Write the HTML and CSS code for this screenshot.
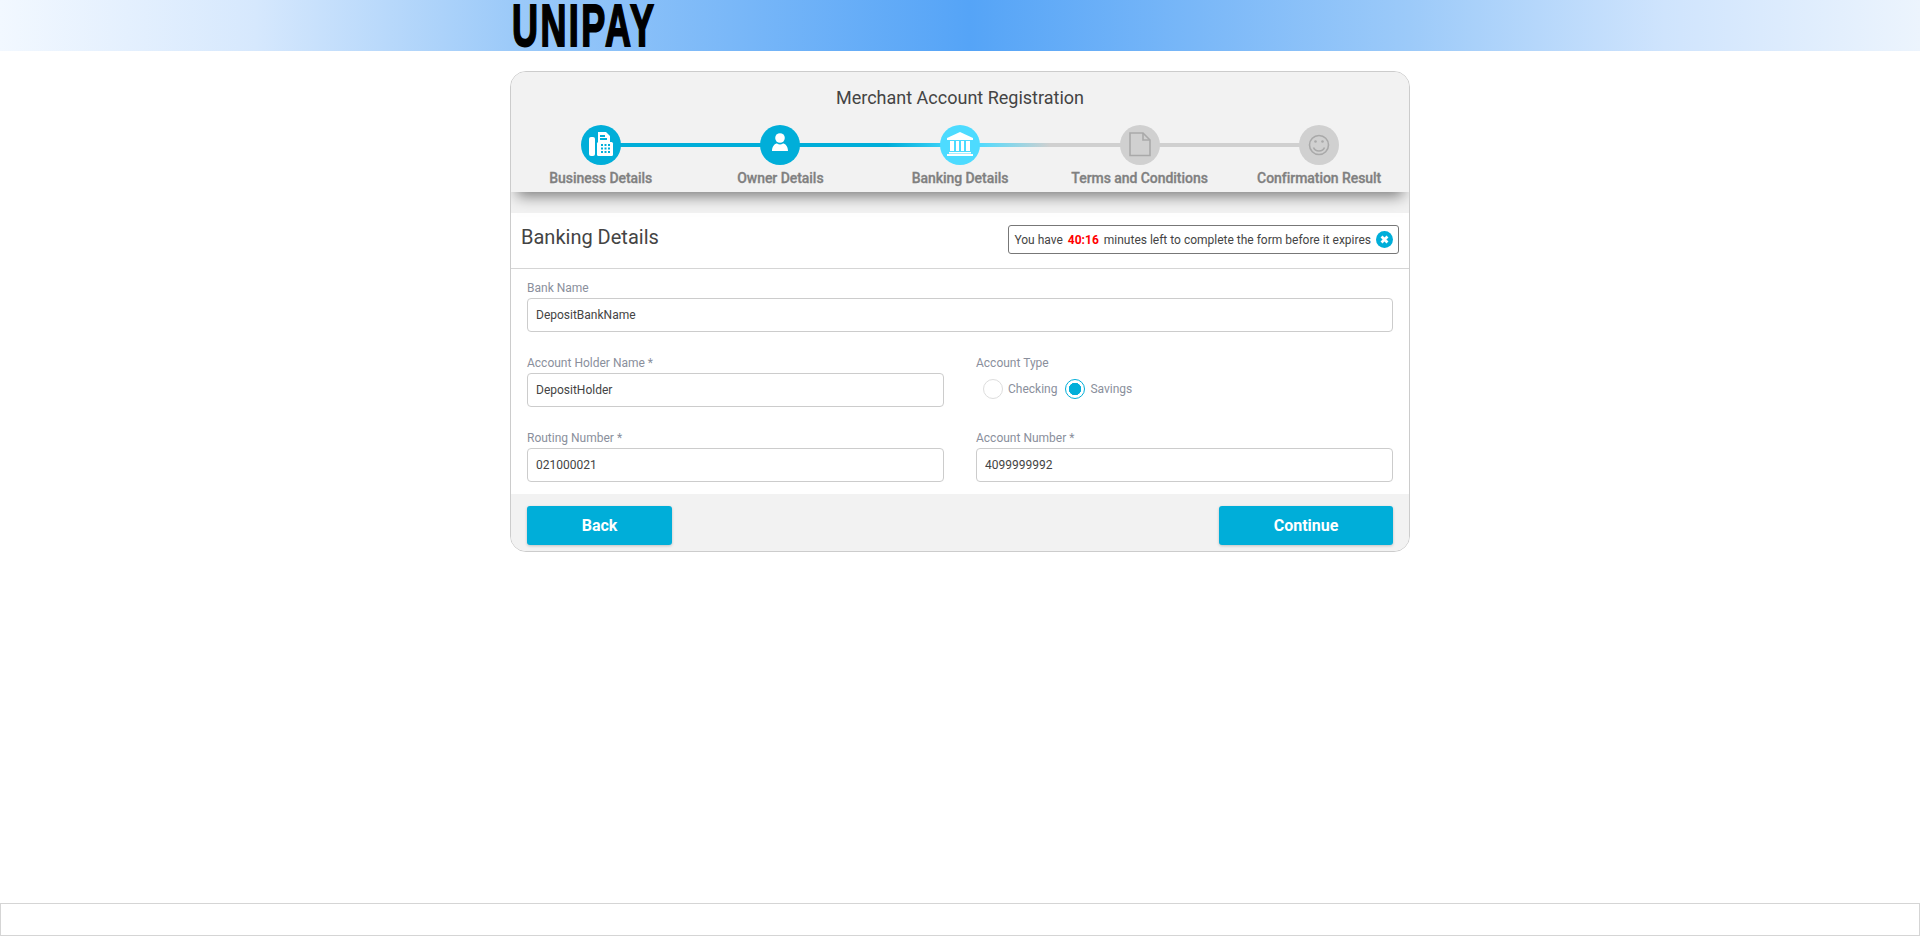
FILE: index.html
```html
<!DOCTYPE html>
<html lang="en">
<head>
  <meta charset="UTF-8">
  <title>Merchant Account Registration</title>
  <link rel="stylesheet" href="styles.css">
</head>
<body>
  <header class="topbar">
    <div class="topbar-inner"><span class="logo">UNIPAY</span></div>
  </header>

  <main class="card">
    <div class="card-head">
      <h1>Merchant Account Registration</h1>
      <ol class="steps">
        <li class="step done">
          <span class="step-icon">
            <svg viewBox="0 0 40 40" width="40" height="40">
              <rect x="8" y="12" width="6" height="19" rx="2" fill="#fff"/>
              <path d="M17 7h8l4 4v8H17z" fill="#fff"/>
              <path d="M19 10h5v2h-5zM19 13h7v2h-7z" fill="#00aed9"/>
              <rect x="16" y="17" width="16" height="14" rx="1.5" fill="#fff"/>
              <path d="M20 19h2v2h-2zM23.500 19h2v2h-2zM27 19h2v2h-2zM20 22.500h2v2h-2zM23.500 22.500h2v2h-2zM27 22.500h2v2h-2zM20 26h2v2h-2zM23.500 26h2v2h-2zM27 26h2v2h-2z" fill="#00aed9"/>
            </svg>
          </span>
          <span class="step-label">Business Details</span>
        </li>
        <li class="step done before-current">
          <span class="step-icon">
            <svg viewBox="0 0 40 40" width="40" height="40">
              <circle cx="20" cy="13" r="4.800" fill="#fff"/>
              <path d="M12 26c0-5 3-7.500 5-7.500 1 .7 2 1 3 1s2-.3 3-1c2 0 5 2.500 5 7.500z" fill="#fff"/>
            </svg>
          </span>
          <span class="step-label">Owner Details</span>
        </li>
        <li class="step current">
          <span class="step-icon">
            <svg viewBox="0 0 40 40" width="40" height="40">
              <path d="M20 7l13 6v2H7v-2z" fill="#fff"/>
              <path d="M10 16h4v10h-4zM16 16h3v10h-3zM21 16h3v10h-3zM26 16h4v10h-4zM9 27h22v1.500H9zM7 29h26v2H7z" fill="#fff"/>
            </svg>
          </span>
          <span class="step-label">Banking Details</span>
        </li>
        <li class="step">
          <span class="step-icon">
            <svg viewBox="0 0 40 40" width="40" height="40" fill="none" stroke="#a9a9a9" stroke-width="1.600">
              <path d="M10 8h13l7 7v15.500H10z"/>
              <path d="M23 8v7h7"/>
            </svg>
          </span>
          <span class="step-label">Terms and Conditions</span>
        </li>
        <li class="step">
          <span class="step-icon">
            <svg viewBox="0 0 40 40" width="40" height="40" fill="none" stroke="#a9a9a9" stroke-width="1.600">
              <circle cx="20" cy="20" r="9.500"/>
              <path d="M14.500 22.500c1 2.500 3 3.500 5.500 3.500s4.500-1 5.500-3.500"/>
              <circle cx="16.500" cy="16.500" r="1.300" fill="#a9a9a9" stroke="none"/>
              <circle cx="23.500" cy="16.500" r="1.300" fill="#a9a9a9" stroke="none"/>
            </svg>
          </span>
          <span class="step-label">Confirmation Result</span>
        </li>
      </ol>
    </div>
    <div class="band"></div>

    <div class="section-head">
      <h2>Banking Details</h2>
      <div class="timer">
        <span>You have</span>
        <span class="time-left">40:16</span>
        <span>minutes left to complete the form before it expires</span>
        <svg class="timer-close" viewBox="0 0 16 16" width="17" height="17">
          <circle cx="8" cy="8" r="8" fill="#00aed9"/>
          <path d="M5.200 5.200l5.600 5.600M10.800 5.200l-5.600 5.600" stroke="#fff" stroke-width="2.600"/>
        </svg>
      </div>
    </div>

    <form class="form">
      <div class="field field-wide">
        <label for="bankName">Bank Name</label>
        <input id="bankName" type="text" value="DepositBankName">
      </div>
      <div class="field">
        <label for="holder">Account Holder Name *</label>
        <input id="holder" type="text" value="DepositHolder">
      </div>
      <div class="field">
        <label>Account Type</label>
        <div class="radios">
          <label class="radio"><input type="radio" name="accountType">Checking</label>
          <label class="radio"><input type="radio" name="accountType" checked>Savings</label>
        </div>
      </div>
      <div class="field">
        <label for="routing">Routing Number *</label>
        <input id="routing" type="text" value="021000021">
      </div>
      <div class="field">
        <label for="account">Account Number *</label>
        <input id="account" type="text" value="4099999992">
      </div>
    </form>

    <div class="card-foot">
      <button class="btn btn-back" type="button">Back</button>
      <button class="btn btn-next" type="button">Continue</button>
    </div>
  </main>

  <footer class="bottombar"></footer>
</body>
</html>
```

FILE: styles.css
```css
* {
  box-sizing: border-box;
}

html, body {
  height: 100%;
}

body {
  margin: 0;
  display: flex;
  flex-direction: column;
  background: #fff;
  font-family: Roboto, "Liberation Sans", sans-serif;
  font-size: 12px;
  color: #444;
}

/* top header */
.topbar {
  height: 51px;
  flex: none;
  background: linear-gradient(90deg, #f2f8ff 0%, #d6e8fd 13.300%, #9ccaf9 26.600%, #55a4f7 50.500%, #9ccaf9 73.400%, #cfe4fd 86.700%, #ecf4fd 100%);
}

.topbar-inner {
  width: 900px;
  height: 51px;
  margin: 0 auto;
  padding-left: 2px;
}

.logo {
  display: block;
  width: 260px;
  font-family: "Liberation Sans", sans-serif;
  font-weight: 700;
  font-size: 60px;
  line-height: 51px;
  color: #000;
  -webkit-text-stroke: 2px #000;
  letter-spacing: 4px;
  white-space: nowrap;
  transform: scaleX(0.6);
  transform-origin: left center;
}

/* main card */
.card {
  width: 900px;
  height: 481px;
  flex: none;
  margin: 20px auto 0;
  border: 1px solid #ccc;
  border-radius: 16px;
  overflow: hidden;
  background: #fff;
}

.card-head {
  position: relative;
  height: 120px;
  padding-top: 15px;
  background: #f2f2f2;
  box-shadow: 0 10px 14px -6px rgba(0, 0, 0, 0.5);
}

h1 {
  margin: 0;
  font-size: 18px;
  font-weight: 400;
  line-height: 22px;
  text-align: center;
  color: #444;
}

.steps {
  display: flex;
  margin: 16px 0 0;
  padding: 0;
  list-style: none;
}

.step {
  position: relative;
  flex: 1;
  display: flex;
  flex-direction: column;
  align-items: center;
}

.step:not(:last-child)::after {
  content: "";
  position: absolute;
  top: 18px;
  left: 50%;
  width: 100%;
  height: 4px;
  background: #d0d0d0;
}

.step.done::after {
  background: #00aed9;
}

.step.before-current::after {
  background: linear-gradient(90deg, #00aed9 60%, #4ddbff 100%);
}

.step.current::after {
  background: linear-gradient(90deg, #4ddbff 10%, #d0d0d0 50%);
}

.step-icon {
  position: relative;
  z-index: 1;
  width: 40px;
  height: 40px;
  border-radius: 50%;
  background: #d0d0d0;
}

.step-icon svg {
  display: block;
}

.step.done .step-icon {
  background: #00aed9;
}

.step.current .step-icon {
  background: #4ddbff;
}

.step-label {
  margin-top: 4px;
  font-size: 14px;
  font-weight: 500;
  line-height: 18px;
  letter-spacing: -0.05px;
  color: #808080;
  -webkit-text-stroke: 0.3px #808080;
  white-space: nowrap;
}

.band {
  height: 21px;
  background: #f2f2f2;
}

/* section title + timer */
.section-head {
  display: flex;
  justify-content: space-between;
  height: 56px;
  padding: 12px 10px 0;
  border-bottom: 1px solid #d5d5d5;
}

h2 {
  margin: 0;
  font-size: 20px;
  font-weight: 400;
  line-height: 24px;
  color: #444;
}

.timer {
  display: flex;
  align-items: center;
  gap: 5px;
  height: 29px;
  padding: 0 5px 0 5px;
  border: 1px solid #777;
  border-radius: 3px;
  color: #444;
}

.time-left {
  font-weight: 700;
  color: #f00;
}

/* form */
.form {
  display: grid;
  grid-template-columns: 417px 417px;
  column-gap: 32px;
  row-gap: 22px;
  padding: 10px 16px 12px;
}

.field-wide {
  grid-column: 1 / 3;
}

.field > label {
  display: block;
  padding-top: 1px;
  margin-bottom: 2px;
  line-height: 16px;
  color: #8a8f9c;
}

input[type="text"] {
  display: block;
  width: 100%;
  height: 34px;
  padding: 0 8px;
  border: 1px solid #ccc;
  border-radius: 4px;
  font-family: inherit;
  font-size: 12px;
  color: #444;
  background: #fff;
}

.radios {
  display: flex;
  gap: 8px;
  padding: 6px 0 0 7px;
}

.radio {
  display: flex;
  align-items: center;
  gap: 5px;
  color: #8a8f9c;
}

input[type="radio"] {
  appearance: none;
  width: 20px;
  height: 20px;
  margin: 0;
  border: 1px solid #ddd;
  border-radius: 50%;
  background: #fff;
}

input[type="radio"]:checked {
  border-color: #00aed9;
  background: radial-gradient(circle, #00aed9 0, #00aed9 6px, #fff 6.500px);
}

/* footer of the card */
.card-foot {
  display: flex;
  justify-content: space-between;
  height: 57px;
  padding: 12px 16px 0;
  background: #f2f2f2;
}

.btn {
  height: 39px;
  border: none;
  border-radius: 3px;
  background: #00aed9;
  color: #fff;
  font-family: inherit;
  font-size: 16px;
  font-weight: 700;
  box-shadow: 0 1px 3px rgba(0, 0, 0, 0.2);
  cursor: pointer;
}

.btn-back {
  width: 145px;
}

.btn-next {
  width: 174px;
}

/* empty bar at the bottom of the window */
.bottombar {
  height: 33px;
  flex: none;
  margin-top: auto;
  margin-bottom: 1px;
  border: 1px solid #d5d5d5;
}
```
